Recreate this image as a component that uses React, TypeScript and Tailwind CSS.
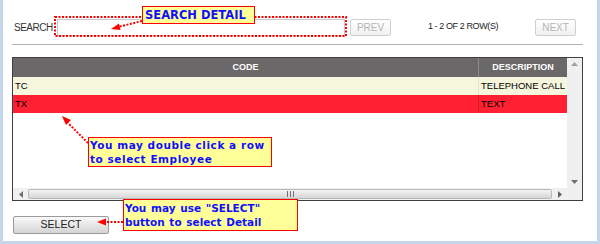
import React from "react";

const calloutCls =
  "absolute bg-[#ffff99] border border-[#ff0000] text-[#1010ff] font-bold text-[10.5px] leading-[13.5px] font-['DejaVu_Sans',sans-serif] whitespace-nowrap";

export default function App() {
  return (
    <div className="relative w-[600px] h-[244px] bg-white border-l-[3px] border-r-[3px] border-b-[3px] border-[#c6d6ea] font-['Liberation_Sans',Arial,sans-serif] overflow-hidden">
      <div className="flex flex-col pl-[9px] pr-[14px]">
        {/* Top bar */}
        <div className="mt-[18px] h-[18px] flex items-center">
          <div className="w-[45px] pl-[2px] text-[10px] tracking-[-0.5px] text-[#333]">SEARCH</div>
          <div className="w-[288px] h-[17px] border border-[#c8c8c8] bg-white" />
          <div className="ml-[5px] w-[41px] h-[17px] border border-[#cfcfcf] rounded-[2px] bg-gradient-to-b from-white to-[#f1f1f1] flex items-center justify-center text-[10px] text-[#b4b4b4]">
            PREV
          </div>
          <div className="w-[144px] text-center text-[9px] tracking-[-0.4px] text-[#222]">1 - 2 OF 2 ROW(S)</div>
          <div className="w-[41px] h-[17px] border border-[#cfcfcf] rounded-[2px] bg-gradient-to-b from-white to-[#f1f1f1] flex items-center justify-center text-[10px] text-[#b4b4b4]">
            NEXT
          </div>
        </div>

        {/* divider */}
        <div className="mt-[8px] h-px bg-[#b0b0b0]" />

        {/* Grid */}
        <div className="mt-[12px] h-[144px] border border-[#3f3f3f] flex flex-col">
          <div className="flex-1 flex">
            <div className="flex-1 flex flex-col bg-white">
              <div className="h-[19px] flex bg-[#6b6869] text-white font-bold text-[9px]">
                <div className="w-[465px] flex items-center justify-center">CODE</div>
                <div className="flex-1 flex items-center justify-center border-l border-[#8d8a8b]">DESCRIPTION</div>
              </div>
              <div className="h-[18px] flex bg-[#f6f6dd] text-[9.5px] text-black">
                <div className="w-[465px] flex items-center pl-[2px]">TC</div>
                <div className="flex-1 flex items-center pl-[2px] border-l border-[#e2e2d0] whitespace-nowrap overflow-hidden">TELEPHONE CALL</div>
              </div>
              <div className="h-[18px] flex bg-[#ff2131] text-[9.5px] text-black">
                <div className="w-[465px] flex items-center pl-[2px]">TX</div>
                <div className="flex-1 flex items-center pl-[2px] border-l border-[#d81a28]">TEXT</div>
              </div>
            </div>
            {/* vertical scrollbar */}
            <div className="w-[15px] bg-[#f0f0f0] flex flex-col items-center justify-between py-[4px]">
              <svg width="7" height="4" viewBox="0 0 7 4"><path d="M0 4 L3.5 0 L7 4 Z" fill="#a0a0a0" /></svg>
              <svg width="7" height="4" viewBox="0 0 7 4"><path d="M0 0 L3.5 4 L7 0 Z" fill="#707070" /></svg>
            </div>
          </div>
          {/* horizontal scrollbar */}
          <div className="h-[12px] flex bg-[#f0f0f0]">
            <div className="w-[15px] flex items-center justify-center">
              <svg width="4" height="7" viewBox="0 0 4 7"><path d="M4 0 L0 3.5 L4 7 Z" fill="#707070" /></svg>
            </div>
            <div className="flex-1 my-[1px] border border-[#b8b8b8] rounded-[2px] bg-gradient-to-b from-[#f4f4f4] to-[#d6d6d6] flex items-center justify-center">
              <svg width="7" height="6" viewBox="0 0 7 6">
                <path d="M0.5 0 V6 M3.5 0 V6 M6.5 0 V6" stroke="#707070" strokeWidth="1" />
              </svg>
            </div>
            <div className="w-[15px] flex items-center justify-center">
              <svg width="4" height="7" viewBox="0 0 4 7"><path d="M0 0 L4 3.5 L0 7 Z" fill="#606060" /></svg>
            </div>
            <div className="w-[15px] bg-[#f0f0f0]" />
          </div>
        </div>

        {/* Select button */}
        <div className="mt-[15px] ml-[1px] w-[96px] h-[18px] border border-[#9a9a9a] rounded-[2px] bg-gradient-to-b from-[#fafafa] to-[#d4d4d4] flex items-center justify-center text-[10.5px] text-[#222]">
          SELECT
        </div>
      </div>

      {/* Annotations overlay */}
      <svg className="absolute top-0 -left-[3px] pointer-events-none" width="600" height="244" viewBox="0 0 600 244">
        <rect x="55" y="17" width="291" height="19" fill="none" stroke="#ff0000" strokeWidth="2" strokeDasharray="2 1.5" />
        <path d="M142 21 L118 27" stroke="#ff0000" strokeWidth="2" strokeDasharray="2 1.5" />
        <path d="M111 29 L119 23.5 L120.5 30 Z" fill="#ff0000" />
        <path d="M88 143 L68 123" stroke="#ff0000" strokeWidth="2" strokeDasharray="2 1.5" />
        <path d="M62 116 L71 120 L66 125 Z" fill="#ff0000" />
        <path d="M123 222 L105 222" stroke="#ff0000" strokeWidth="2" strokeDasharray="2 1.5" />
        <path d="M97 222 L106 218.5 L106 225.5 Z" fill="#ff0000" />
      </svg>

      <div className={calloutCls + " left-[139px] top-[6px] w-[113px] h-[18px] pl-[2px] leading-[16px] text-[11.5px]"}>SEARCH DETAIL</div>
      <div className={calloutCls + " left-[85px] top-[137px] w-[184px] h-[30px] pl-[1px] pt-[1px] tracking-[0.55px]"}>
        You may double click a row
        <br />
        to select Employee
      </div>
      <div className={calloutCls + " left-[120px] top-[199px] w-[175px] h-[32px] pl-[1px] pt-[2px] [word-spacing:1px]"}>
        You may use "SELECT"
        <br />
        button to select Detail
      </div>
    </div>
  );
}
